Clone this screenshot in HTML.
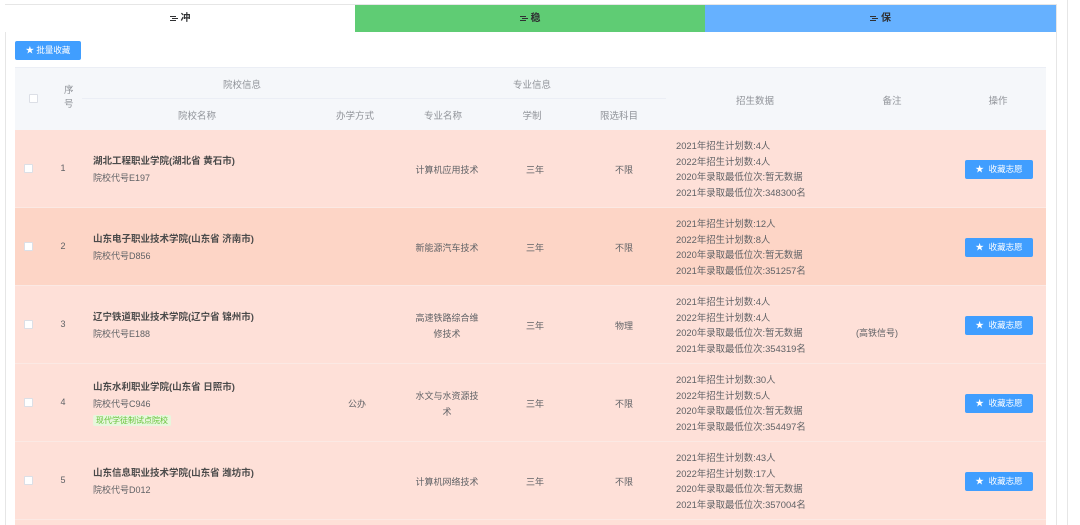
<!DOCTYPE html>
<html><head><meta charset="utf-8"><style>
*{margin:0;padding:0;box-sizing:border-box}
html,body{width:1080px;height:525px;overflow:hidden}
body{background:#fff;font-family:"Liberation Sans","Noto Sans CJK SC",sans-serif;font-size:9px;color:#606266;position:relative}
.a{position:absolute}
.panel{left:5px;top:4px;width:1052px;height:521px;border:1px solid #e6e6e6;border-bottom:none}
.tab{top:5px;height:27px;line-height:27px;text-align:center;font-weight:bold;color:#303133;font-size:10px}
.tab svg{vertical-align:-1px;margin-right:3px}
.btn{background:#409eff;color:#fff;border-radius:2px;text-align:center;font-size:8.5px}
.hd{background:#f5f7fa;color:#909399;font-size:9.5px}
.row{left:15px;width:1031px;height:78px;border-bottom:1px solid #fbe9e4}
.c{position:absolute;text-align:center;transform:translateX(-50%);white-space:nowrap}
.cb{position:absolute;left:9px;width:9px;height:9px;background:#fff;border:1px solid #dcdfe6;border-radius:1px}
.nm{position:absolute;left:78px;line-height:16px}
.nm b{color:#4a4a4a;font-size:9.5px}
.data{position:absolute;left:661px;line-height:15.5px;font-size:9.4px}
</style></head><body>
<div class="a panel"></div>
<div class="a" style="left:1067px;top:0;width:1px;height:525px;background:#e6e6e6"></div>
<div class="a tab" style="left:5px;width:350px;background:#fff"><svg width="8" height="7" viewBox="0 0 8 7"><path d="M0 1.5H6M2 3.5H8M0 5.5H6" stroke="#303133" stroke-width="1"/></svg>冲</div>
<div class="a tab" style="left:355px;width:350px;background:#5fcc74"><svg width="8" height="7" viewBox="0 0 8 7"><path d="M0 1.5H6M2 3.5H8M0 5.5H6" stroke="#303133" stroke-width="1"/></svg>稳</div>
<div class="a tab" style="left:705px;width:351px;background:#66b1ff"><svg width="8" height="7" viewBox="0 0 8 7"><path d="M0 1.5H6M2 3.5H8M0 5.5H6" stroke="#303133" stroke-width="1"/></svg>保</div>
<div class="a btn" style="left:15px;top:41px;width:66px;height:19px;line-height:19px">★ 批量收藏</div>

<div class="a hd" style="left:15px;top:67px;width:1031px;height:63px;border-top:1px solid #ebeef5"></div>
<div class="a" style="left:82px;top:98px;width:584px;height:1px;background:#ebeef5"></div>
<div class="a cb" style="left:29px;top:94px"></div>
<div class="a hd" style="left:64px;top:84px;line-height:14px;background:none;text-align:center">序<br>号</div>
<div class="a hd c" style="left:242px;top:77px;background:none">院校信息</div>
<div class="a hd c" style="left:532px;top:77px;background:none">专业信息</div>
<div class="a hd c" style="left:197px;top:108px;background:none">院校名称</div>
<div class="a hd c" style="left:355px;top:108px;background:none">办学方式</div>
<div class="a hd c" style="left:443px;top:108px;background:none">专业名称</div>
<div class="a hd c" style="left:532px;top:108px;background:none">学制</div>
<div class="a hd c" style="left:619px;top:108px;background:none">限选科目</div>
<div class="a hd c" style="left:755px;top:93px;background:none">招生数据</div>
<div class="a hd c" style="left:892px;top:93px;background:none">备注</div>
<div class="a hd c" style="left:998px;top:93px;background:none">操作</div>

<div class="a row" style="top:130px;background:#fee0d8">
 <div class="cb" style="top:34px"></div><div class="c" style="left:48px;top:33px">1</div>
 <div class="nm" style="top:23px"><b>湖北工程职业学院(湖北省 黄石市)</b><br>院校代号E197</div>
 <div class="c" style="left:432px;top:33px">计算机应用技术</div><div class="c" style="left:520px;top:33px">三年</div><div class="c" style="left:609px;top:33px">不限</div>
 <div class="data" style="top:8px">2021年招生计划数:4人<br>2022年招生计划数:4人<br>2020年录取最低位次:暂无数据<br>2021年录取最低位次:348300名</div>
 <div class="btn" style="position:absolute;left:950px;top:30px;width:68px;height:19px;line-height:19px">★ &nbsp;收藏志愿</div>
</div>
<div class="a row" style="top:208px;background:#fdd5c6">
 <div class="cb" style="top:34px"></div><div class="c" style="left:48px;top:33px">2</div>
 <div class="nm" style="top:23px"><b>山东电子职业技术学院(山东省 济南市)</b><br>院校代号D856</div>
 <div class="c" style="left:432px;top:33px">新能源汽车技术</div><div class="c" style="left:520px;top:33px">三年</div><div class="c" style="left:609px;top:33px">不限</div>
 <div class="data" style="top:8px">2021年招生计划数:12人<br>2022年招生计划数:8人<br>2020年录取最低位次:暂无数据<br>2021年录取最低位次:351257名</div>
 <div class="btn" style="position:absolute;left:950px;top:30px;width:68px;height:19px;line-height:19px">★ &nbsp;收藏志愿</div>
</div>
<div class="a row" style="top:286px;background:#fee0d8">
 <div class="cb" style="top:34px"></div><div class="c" style="left:48px;top:33px">3</div>
 <div class="nm" style="top:23px"><b>辽宁铁道职业技术学院(辽宁省 锦州市)</b><br>院校代号E188</div>
 <div class="c" style="left:432px;top:24px;line-height:16px">高速铁路综合维<br>修技术</div><div class="c" style="left:520px;top:33px">三年</div><div class="c" style="left:609px;top:33px">物理</div>
 <div class="data" style="top:8px">2021年招生计划数:4人<br>2022年招生计划数:4人<br>2020年录取最低位次:暂无数据<br>2021年录取最低位次:354319名</div>
 <div class="c" style="left:862px;top:40px">(高铁信号)</div>
 <div class="btn" style="position:absolute;left:950px;top:30px;width:68px;height:19px;line-height:19px">★ &nbsp;收藏志愿</div>
</div>
<div class="a row" style="top:364px;background:#fee0d8">
 <div class="cb" style="top:34px"></div><div class="c" style="left:48px;top:33px">4</div>
 <div class="nm" style="top:15px"><b>山东水利职业学院(山东省 日照市)</b><br>院校代号C946<br><span style="background:#e7f7dc;color:#67c23a;font-size:8px;padding:1px 3px;border-radius:2px">现代学徒制试点院校</span></div>
 <div class="c" style="left:342px;top:33px">公办</div>
 <div class="c" style="left:432px;top:24px;line-height:16px">水文与水资源技<br>术</div><div class="c" style="left:520px;top:33px">三年</div><div class="c" style="left:609px;top:33px">不限</div>
 <div class="data" style="top:8px">2021年招生计划数:30人<br>2022年招生计划数:5人<br>2020年录取最低位次:暂无数据<br>2021年录取最低位次:354497名</div>
 <div class="btn" style="position:absolute;left:950px;top:30px;width:68px;height:19px;line-height:19px">★ &nbsp;收藏志愿</div>
</div>
<div class="a row" style="top:442px;background:#fee0d8">
 <div class="cb" style="top:34px"></div><div class="c" style="left:48px;top:33px">5</div>
 <div class="nm" style="top:23px"><b>山东信息职业技术学院(山东省 潍坊市)</b><br>院校代号D012</div>
 <div class="c" style="left:432px;top:33px">计算机网络技术</div><div class="c" style="left:520px;top:33px">三年</div><div class="c" style="left:609px;top:33px">不限</div>
 <div class="data" style="top:8px">2021年招生计划数:43人<br>2022年招生计划数:17人<br>2020年录取最低位次:暂无数据<br>2021年录取最低位次:357004名</div>
 <div class="btn" style="position:absolute;left:950px;top:30px;width:68px;height:19px;line-height:19px">★ &nbsp;收藏志愿</div>
</div>
<div class="a" style="left:15px;top:520px;width:1031px;height:5px;background:#fee0d8"></div>
</body></html>
